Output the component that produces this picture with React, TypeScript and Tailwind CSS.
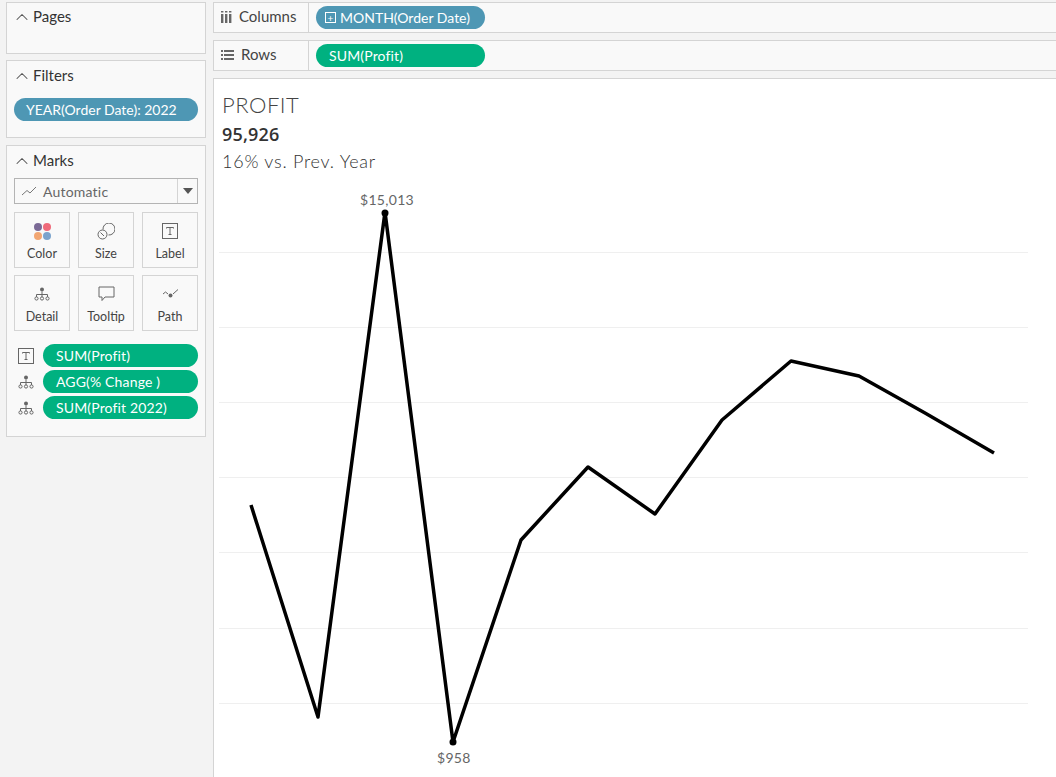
import type { ReactNode } from "react";
import { ChevronUp } from "lucide-react";

const FONT = "font-['Lato','Open_Sans',sans-serif]";

const points = "37,426 104,638 171,133 239,663 307,461 374,388 441,435 508,341 577,282 645,297 711,334 780,374";
const gridLines = [173, 248, 323, 398, 473, 549, 624];

function DetailIcon({ className = "" }: { className?: string }) {
  return (
    <svg width="16" height="14" viewBox="0 0 16 14" className={className} fill="none" stroke="#666" strokeWidth="1">
      <circle cx="8" cy="2.5" r="2" fill="#666" stroke="none" />
      <path d="M8 4.5V7.5M2.5 10V7.5H13.5V10M8 7.5V10" />
      <circle cx="2.5" cy="11.5" r="1.6" />
      <circle cx="8" cy="11.5" r="1.6" />
      <circle cx="13.5" cy="11.5" r="1.6" />
    </svg>
  );
}

function LabelIcon() {
  return (
    <svg width="16" height="16" viewBox="0 0 16 16" fill="none" stroke="#666">
      <rect x="0.5" y="0.5" width="15" height="15" />
      <path d="M4.5 5.5V4.5H11.5V5.5M8 4.5V11.5M6.5 11.5H9.5" />
    </svg>
  );
}

function Panel({ title, className, children }: { title: string; className: string; children?: ReactNode }) {
  return (
    <section className={`border border-[#d4d4d4] bg-[#f9f9f9] ${className}`}>
      <div className="mt-[4px] flex h-[19px] items-center gap-[1px] pl-[5px]">
        <ChevronUp size={20} strokeWidth={1.25} className="text-[#555]" />
        <span className="text-[15px] text-[#333]">{title}</span>
      </div>
      {children}
    </section>
  );
}

function Pill({ color, children, className = "" }: { color: string; children: ReactNode; className?: string }) {
  return (
    <div className={`flex h-[23px] items-center rounded-full text-[14px] text-white ${color} ${className}`}>
      {children}
    </div>
  );
}

function MarkButton({ label, icon }: { label: string; icon: ReactNode }) {
  return (
    <div className="flex h-[56px] w-[56px] flex-col items-center border border-[#d4d4d4] bg-[#f9f9f9]">
      <div className="mt-[10px] flex h-[16px] items-center justify-center">{icon}</div>
      <span className="mt-[7px] text-[12.5px] leading-[16px] text-[#444]">{label}</span>
    </div>
  );
}

function ShelfRow({ icon, title, children }: { icon: ReactNode; title: string; children: ReactNode }) {
  return (
    <div className="flex h-[31px] border-y border-l border-[#d4d4d4] bg-[#f9f9f9]">
      <div className="flex w-[95px] shrink-0 items-center gap-[7px] border-r border-[#d4d4d4] pb-[2px] pl-[7px] text-[15px] text-[#444]">
        {icon}
        <span>{title}</span>
      </div>
      <div className="flex items-center pl-[7px]">{children}</div>
    </div>
  );
}

export default function App() {
  return (
    <div className={`flex h-[777px] w-[1056px] overflow-hidden bg-[#f3f3f3] ${FONT}`}>
      {/* Left side cards */}
      <aside className="flex w-[213px] shrink-0 flex-col pl-[6px] pr-[7px] pt-[2px]">
        <Panel title="Pages" className="h-[52px]" />
        <Panel title="Filters" className="mt-[6px] h-[78px] pt-[1px]">
          <Pill color="bg-[#4e97b4]" className="mx-[7px] mt-[13px] pl-[12px]">YEAR(Order Date): 2022</Pill>
        </Panel>
        <Panel title="Marks" className="mt-[7px] h-[292px] pt-[1px]">
          <div className="mx-[7px] mt-[8px] flex h-[26px] items-center border border-[#b4b4b4] bg-[#f9f9f9]">
            <svg width="16" height="10" viewBox="0 0 16 10" fill="none" stroke="#777" className="ml-[6px]">
              <path d="M1 9L6 4.5L9 7L15 1" />
            </svg>
            <span className="ml-[6px] flex-1 text-[14px] tracking-[0.2px] text-[#666]">Automatic</span>
            <div className="flex h-full w-[20px] items-center justify-center border-l border-[#d4d4d4]">
              <div className="h-0 w-0 border-x-[5px] border-t-[6px] border-x-transparent border-t-[#555]" />
            </div>
          </div>
          <div className="mx-[7px] mt-[8px] grid grid-cols-[56px_56px_56px] gap-x-[8px] gap-y-[7px]">
            <MarkButton
              label="Color"
              icon={
                <div className="grid grid-cols-2 gap-[1px]">
                  <span className="h-[8px] w-[8px] rounded-full bg-[#7b6a96]" />
                  <span className="h-[8px] w-[8px] rounded-full bg-[#ef6a7a]" />
                  <span className="h-[8px] w-[8px] rounded-full bg-[#f2a672]" />
                  <span className="h-[8px] w-[8px] rounded-full bg-[#7ba3cc]" />
                </div>
              }
            />
            <MarkButton
              label="Size"
              icon={
                <svg width="18" height="17" viewBox="0 0 18 17" fill="none" stroke="#666">
                  <path d="M6 6.5A6 6 0 1 1 11.5 12" />
                  <circle cx="5.5" cy="11.5" r="4.5" />
                  <path d="M3.5 9.5L7 13" />
                </svg>
              }
            />
            <MarkButton label="Label" icon={<LabelIcon />} />
            <MarkButton label="Detail" icon={<DetailIcon />} />
            <MarkButton
              label="Tooltip"
              icon={
                <svg width="17" height="16" viewBox="0 0 17 16" fill="none" stroke="#666">
                  <path d="M1 1H16V11H7L4 14.5V11H1Z" />
                </svg>
              }
            />
            <MarkButton
              label="Path"
              icon={
                <svg width="17" height="12" viewBox="0 0 17 12" fill="none" stroke="#666">
                  <path d="M1 6L3.5 4L6 6" />
                  <circle cx="8.5" cy="7.5" r="2" fill="#666" stroke="none" />
                  <path d="M11 6L16 1.5" />
                </svg>
              }
            />
          </div>
          <div className="mt-[13px] flex flex-col gap-[3px] pl-[11px] pr-[7px]">
            {[
              { text: "SUM(Profit)", label: true },
              { text: "AGG(% Change )", label: false },
              { text: "SUM(Profit 2022)", label: false },
            ].map((row) => (
              <div key={row.text} className="flex items-center gap-[9px]">
                <div className="flex w-[16px] justify-center">{row.label ? <LabelIcon /> : <DetailIcon />}</div>
                <Pill color="bg-[#00b180]" className="flex-1 pl-[13px] tracking-[0.15px]">{row.text}</Pill>
              </div>
            ))}
          </div>
        </Panel>
      </aside>

      {/* Shelves and view */}
      <main className="flex flex-1 flex-col gap-[7px] pt-[2px]">
        <ShelfRow
          title="Columns"
          icon={
            <svg width="11" height="12" viewBox="0 0 11 12" fill="#666">
              <rect x="0" y="3" width="2.4" height="9" />
              <rect x="4" y="3" width="2.4" height="9" />
              <rect x="8" y="3" width="2.4" height="9" />
              <rect x="0" y="0" width="2.4" height="1.5" />
              <rect x="4" y="0" width="2.4" height="1.5" />
              <rect x="8" y="0" width="2.4" height="1.5" />
            </svg>
          }
        >
          <Pill color="bg-[#4e97b4]" className="w-[169px] pl-[9px]">
            <span className="mr-[4px] flex h-[11px] w-[11px] items-center justify-center border border-white text-[10px] leading-none">+</span>
            MONTH(Order Date)
          </Pill>
        </ShelfRow>
        <ShelfRow
          title="Rows"
          icon={
            <svg width="13" height="10" viewBox="0 0 13 10" fill="#666">
              <rect x="0" y="0" width="2" height="2" />
              <rect x="3" y="0" width="10" height="2" />
              <rect x="0" y="4" width="2" height="2" />
              <rect x="3" y="4" width="10" height="2" />
              <rect x="0" y="8" width="2" height="2" />
              <rect x="3" y="8" width="10" height="2" />
            </svg>
          }
        >
          <Pill color="bg-[#00b180]" className="w-[169px] pl-[13px] tracking-[0.15px]">SUM(Profit)</Pill>
        </ShelfRow>

        <div className="relative min-h-0 flex-1 border-l border-t border-[#d4d4d4] bg-white">
          <div className="pl-[8px] pt-[12px]">
            <h1 className="text-[22px] font-light leading-[28px] tracking-[0.5px] text-[#444]">PROFIT</h1>
            <p className="mt-[2px] font-['Open_Sans',sans-serif] text-[18px] font-semibold leading-[26px] tracking-[0.2px] text-[#333]">95,926</p>
            <p className="mt-[1px] text-[18px] font-light leading-[26px] tracking-[0.75px] text-[#333]">16% vs. Prev. Year</p>
          </div>
          <svg width="842" height="699" viewBox="0 0 842 699" className="absolute left-0 top-0">
            {gridLines.map((y) => (
              <line key={y} x1="5" x2="814" y1={y + 0.5} y2={y + 0.5} stroke="#efefef" />
            ))}
            <polyline points={points} fill="none" stroke="#000" strokeWidth="3.5" strokeLinejoin="round" />
            <circle cx="171" cy="134" r="3.5" fill="#000" />
            <circle cx="239" cy="663" r="3.5" fill="#000" />
          </svg>
          <span className="absolute left-[146px] top-[110px] text-[14px] tracking-[0.3px] text-[#666]">$15,013</span>
          <span className="absolute left-[223px] top-[668px] text-[14px] tracking-[0.3px] text-[#666]">$958</span>
        </div>
      </main>
    </div>
  );
}
